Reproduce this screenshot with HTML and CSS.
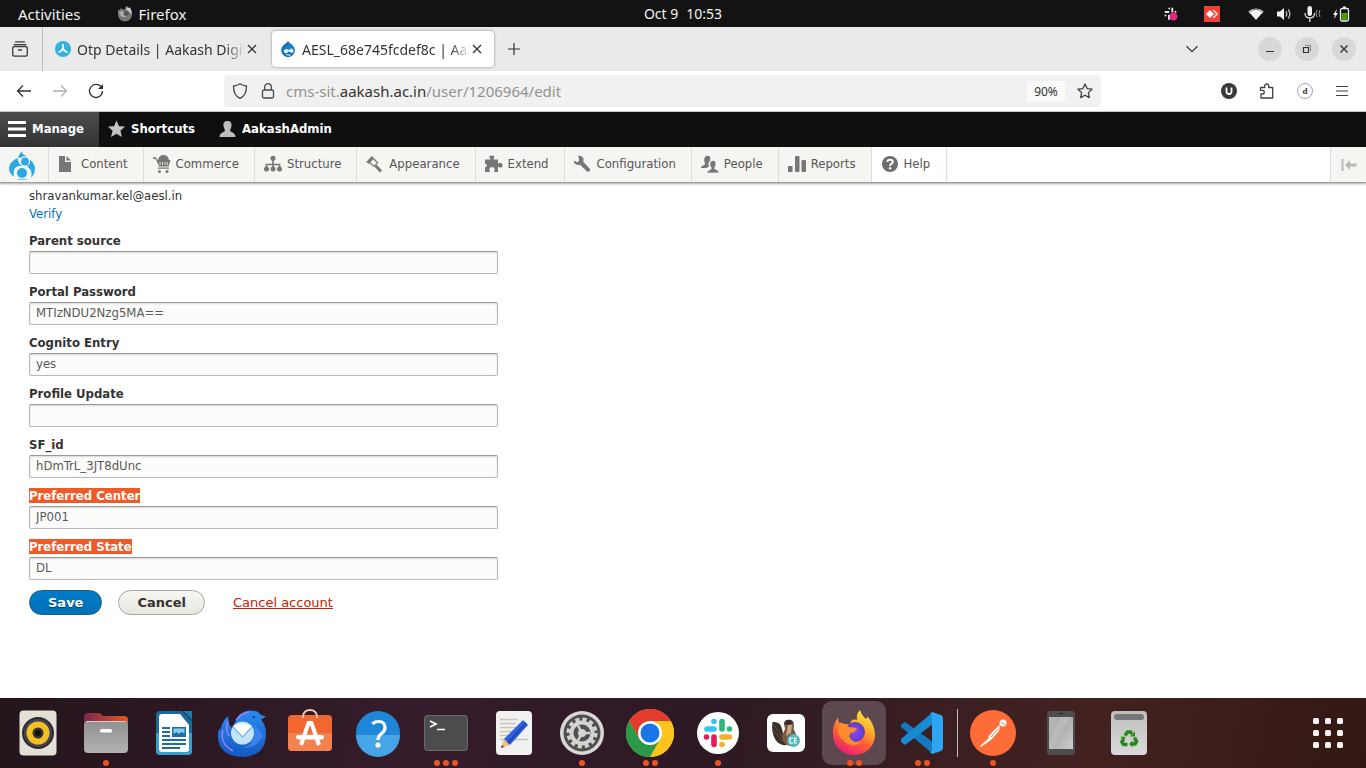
FILE: index.html
```html
<!DOCTYPE html>
<html lang="en">
<head>
<meta charset="utf-8">
<title>AESL_68e745fcdef8c | Aakash</title>
<link rel="stylesheet" href="styles.css">
</head>
<body>
<svg class="defs" width="0" height="0" aria-hidden="true">
  <defs>
    <linearGradient id="g-shell" x1="0" y1="0" x2="0" y2="1"><stop offset="0" stop-color="#919191"/><stop offset="1" stop-color="#b2b2b2"/></linearGradient>
    <linearGradient id="g-folder" x1="0" y1="0" x2="1" y2="0"><stop offset="0" stop-color="#7d2850"/><stop offset="1" stop-color="#e95420"/></linearGradient>
    <linearGradient id="g-bird" x1="0" y1="0" x2="0" y2="1"><stop offset="0" stop-color="#2a8bf2"/><stop offset="1" stop-color="#1359c2"/></linearGradient>
    <linearGradient id="g-fox" x1=".8" y1="0" x2=".3" y2="1"><stop offset="0" stop-color="#fff04a"/><stop offset=".35" stop-color="#ffae28"/><stop offset=".65" stop-color="#ff5a35"/><stop offset="1" stop-color="#ee1a78"/></linearGradient>
    <radialGradient id="g-globe"><stop offset="0" stop-color="#8b49f5"/><stop offset="1" stop-color="#5b3fc4"/></radialGradient>
    <linearGradient id="g-phone" x1="0" y1="0" x2="1" y2="1"><stop offset="0" stop-color="#b4b4b4"/><stop offset=".5" stop-color="#b0b0b0"/><stop offset="1" stop-color="#cdcdcd"/></linearGradient>
    <linearGradient id="g-bin" x1="0" y1="0" x2="0" y2="1"><stop offset="0" stop-color="#bdbdbd"/><stop offset="1" stop-color="#dadada"/></linearGradient>
  </defs>
</svg>

<header class="topbar">
  <div class="topbar-left">
    <button class="topbar-item">Activities</button>
    <button class="topbar-item app-name">
      <svg width="16" height="16" viewBox="0 0 16 16"><path d="M1 3l1.500 1.500L4 2l2 1.500h1.500L9.500 0l1.500 2 2-.5 1.500 3.500.5 3.500a7 7 0 0 1-14 0z" fill="#777"/><path d="M9.500 0l1.500 2 2-.5 1.500 3.500v4l-2-3-3-2z" fill="#c9c9c9"/><path d="M2 5.500l3-.5 3 1.500q0 1.500-2 1.500 1 2.500 4 2-4 3-7-1z" fill="#aaa"/><circle cx="9.300" cy="7.300" r="2.500" fill="#555"/></svg>
      Firefox
    </button>
  </div>
  <button class="topbar-item clock"><span>Oct 9</span><span>10:53</span></button>
  <div class="topbar-right">
    <svg class="tray-slack" width="14" height="14" viewBox="0 0 14 14"><g stroke="#e8e8e8" stroke-width="1.900" stroke-linecap="round" fill="none"><path d="M1.500 5h3M5.300 1.500h0M8.300 1.500v3M11.500 4.800h0M5 8.500v3.500M1.500 8.500h0"/></g><circle cx="9.500" cy="9.500" r="3.900" fill="#e8267e"/></svg>
    <svg class="tray-desk" width="16" height="16" viewBox="0 0 16 16"><path fill="#ef4136" d="M0 0h16v16H0z"/><path fill="#fff" d="M6 4l4 4-4 4-4-4zM8.500 4h1.500l4 4-4 4H8.500l3.500-4z"/></svg>
    <svg class="tray-wifi" width="16" height="14" viewBox="0 0 16 14"><path fill="#f2f2f2" d="M.5 4.500a11 11 0 0 1 15 0L8 13z"/><path d="M2 4.700a9 9 0 0 1 12 0" stroke="#777" fill="none"/></svg>
    <svg width="16" height="14" viewBox="0 0 16 14"><path fill="#f2f2f2" d="M1 4.500h3L8 1v12L4 9.500H1z"/><path d="M9.800 4.500q2 2.500 0 5M12.200 2.500q3.400 4.500 0 9" stroke="#bbb" stroke-width="1.300" fill="none"/></svg>
    <svg width="17" height="16" viewBox="0 0 17 16"><rect x="3.500" y="0" width="4.500" height="10" rx="2.200" fill="#f2f2f2"/><path d="M1 7q0 5 4.800 5t4.800-5M5.800 12v4" stroke="#ddd" stroke-width="1.300" fill="none"/><path d="M13 4q-2 3 0 7M16 4q-2 3 0 7" stroke="#999" fill="none"/></svg>
    <svg width="17" height="16" viewBox="0 0 17 16"><path fill="#eee" d="M4 3L0 9h2l-1 4 4-6H3z"/><path d="M10 1.500h3" stroke="#eee" stroke-width="2"/><rect x="7.500" y="2.500" width="8" height="12.500" rx="1.500" fill="none" stroke="#eee" stroke-width="1.300"/><path fill="#4e9a06" d="M8.500 7h6v7h-6z"/></svg>
  </div>
</header>

<nav class="tabstrip" aria-label="Browser tabs">
  <button class="view-btn" aria-label="Recent browsing"><svg width="18" height="18" viewBox="0 0 18 18" fill="none" stroke="#3f3f44" stroke-width="1.300" stroke-linecap="round"><path d="M4.500 1.800h9M3 4.700h12"/><rect x="1.700" y="6.500" width="14.600" height="9.700" rx="2"/><path d="M7.500 10h3"/></svg></button>
  <div class="tab">
    <svg width="16" height="16" viewBox="0 0 16 16"><circle cx="8" cy="8" r="8" fill="#35b1dd"/><path d="M8 3v4M8 7c-.5 3-3 3.500-4.500 4.500M8 7c.5 3 3 3.500 4.500 4.500" stroke="#fff" stroke-width="1.600" fill="none"/></svg>
    <span class="tab-title">Otp Details | Aakash Digital</span>
    <button class="tab-close" aria-label="Close tab"><svg width="10" height="10" viewBox="0 0 10 10"><path d="M1 1l8 8M9 1L1 9" stroke="#333" stroke-width="1.300"/></svg></button>
  </div>
  <div class="tab tab-active">
    <svg width="16" height="16" viewBox="0 0 16 16"><path d="M8 0c1 2.500 6.800 4 6.800 9.300a6.800 6.800 0 0 1-13.600 0C1.200 4 7 2.500 8 0z" fill="#0e6db7"/><path d="M9 1.500c2 2 5.500 4 5.500 8 0 2-1 3-2 2-1.500-1-3-2-5-.5-2 1-4 1-5-.500 0-5 5-5 6.500-9z" fill="#1682cc"/><path d="M5 12q-2-3 1-3.500 1.500 0 2.500 1 4-3 4.500 0 0 3-2.500 1.500L8.500 10Q7 12.500 5 12zM6 13.500q2 1.500 5 .3" fill="#fff" stroke="#fff" stroke-width=".6"/></svg>
    <span class="tab-title">AESL_68e745fcdef8c | Aakash</span>
    <button class="tab-close" aria-label="Close tab"><svg width="10" height="10" viewBox="0 0 10 10"><path d="M1 1l8 8M9 1L1 9" stroke="#333" stroke-width="1.300"/></svg></button>
  </div>
  <button class="new-tab" aria-label="New tab"><svg width="12" height="12" viewBox="0 0 12 12"><path d="M6 0v12M0 6h12" stroke="#333" stroke-width="1.200"/></svg></button>
  <div class="window-tools">
    <button class="list-tabs" aria-label="List all tabs"><svg width="14" height="8" viewBox="0 0 14 8"><path d="M1.500 1.200L7 6.700l5.500-5.500" fill="none" stroke="#3a3a3a" stroke-width="1.300"/></svg></button>
    <button class="win-btn" aria-label="Minimize"><svg width="10" height="10" viewBox="0 0 10 10"><path d="M1 7.500h8" stroke="#333"/></svg></button>
    <button class="win-btn" aria-label="Restore"><svg width="10" height="10" viewBox="0 0 10 10" fill="none"><path d="M3 1.500h5.500V7" stroke="#888"/><path d="M1.500 3.500h5v5h-5z" stroke="#333" stroke-width="1.200"/></svg></button>
    <button class="win-btn" aria-label="Close"><svg width="10" height="10" viewBox="0 0 10 10"><path d="M1.500 1.500l7 7M8.500 1.500l-7 7" stroke="#333" stroke-width="1.400"/></svg></button>
  </div>
</nav>

<div class="navbar">
  <button class="nav-btn" aria-label="Back"><svg width="16" height="14" viewBox="0 0 16 14"><path d="M7 1.500L1.500 7 7 12.500M1.500 7H15" fill="none" stroke="#303036" stroke-width="1.300"/></svg></button>
  <button class="nav-btn" aria-label="Forward"><svg width="16" height="14" viewBox="0 0 16 14"><path d="M9 1.500L14.500 7 9 12.500M14.500 7H1" fill="none" stroke="#b0b0b2" stroke-width="1.300"/></svg></button>
  <button class="nav-btn" aria-label="Reload"><svg width="16" height="16" viewBox="0 0 16 16"><path d="M13.500 4.500A6.500 6.500 0 1 0 14.500 8" fill="none" stroke="#303036" stroke-width="1.300"/><path d="M15 1v5h-5z" fill="#303036"/></svg></button>
  <div class="urlbar">
    <svg width="16" height="16" viewBox="0 0 16 16"><path d="M8 .8c2 1.400 4 2 6.500 2.200C14.600 9 13 13 8 15.300 3 13 1.400 9 1.500 3 4 2.800 6 2.200 8 .8z" fill="none" stroke="#47474c" stroke-width="1.300"/></svg>
    <svg class="lock" width="14" height="16" viewBox="0 0 14 16"><rect x="1.500" y="7" width="11" height="8" rx="1.500" fill="none" stroke="#47474c" stroke-width="1.300"/><path d="M3.700 7V4a3.300 3.300 0 0 1 6.600 0v3" fill="none" stroke="#47474c" stroke-width="1.300"/></svg>
    <a class="address" href="#">cms-sit.<span class="host">aakash.ac.in</span>/user/1206964/edit</a>
    <button class="zoom-badge">90%</button>
    <button class="star" aria-label="Bookmark"><svg width="16" height="16" viewBox="0 0 16 16"><path d="M8 1l2.100 4.600 4.900.6-3.600 3.400.9 5L8 12.200l-4.300 2.400.9-5L1 6.200l4.900-.6z" fill="none" stroke="#3f3f44" stroke-width="1.300" stroke-linejoin="round"/></svg></button>
  </div>
  <div class="nav-tools">
    <button aria-label="uBlock"><svg width="16" height="16" viewBox="0 0 16 16"><circle cx="8" cy="8" r="8" fill="#38383d"/><path d="M5.500 4.500v4q0 2.500 2.500 2.500t2.500-2.500v-4" fill="none" stroke="#fff" stroke-width="1.800"/></svg></button>
    <button aria-label="Extensions"><svg width="16" height="16" viewBox="0 0 16 16"><path d="M1.500 6V4.500h4.200V3a2 2 0 0 1 4 0v1.500h4v10.500H2v-4h1.500a1.800 1.800 0 0 0 0-3.600H1.500z" fill="none" stroke="#3f3f44" stroke-width="1.300" stroke-linejoin="round"/></svg></button>
    <button class="ext-d">d</button>
    <button aria-label="Menu"><svg width="14" height="12" viewBox="0 0 14 12"><path d="M1 1.500h12M1 6h12M1 10.500h12" stroke="#3f3f44" stroke-width="1.200"/></svg></button>
  </div>
</div>

<div class="admin-bar">
  <a class="admin-tab is-open" href="#"><svg width="18" height="18" viewBox="0 0 18 18"><path d="M0 2.500h18M0 9h18M0 15.500h18" stroke="#fff" stroke-width="3"/></svg>Manage</a>
  <a class="admin-tab" href="#"><svg width="18" height="18" viewBox="0 0 18 18"><path d="M8.500.5l2.500 5.700 6 .4-4.600 4.100L14 17l-5.500-3.300L3 17l1.600-6.300L0 6.600l6-.4z" fill="#c4c4c4"/></svg>Shortcuts</a>
  <a class="admin-tab" href="#"><svg width="18" height="18" viewBox="0 0 18 18"><path d="M8.500 1c3 0 4.500 2 4 5-.3 2-1.200 3-1.500 4.500.5 2.500 5.500 1.500 5.500 6.500H.5c0-5 5-4 5.500-6.500C5.700 9 4.800 8 4.500 6c-.5-3 1-5 4-5z" fill="#bdbdbd"/></svg>AakashAdmin</a>
</div>

<nav class="tray" aria-label="Administration menu">
  <a class="tray-home" href="#" aria-label="Home"><svg width="28" height="30" viewBox="0 0 28 30" fill="#2ba9e0"><path d="M13.500 1q.5 3.500 6 5.500-4-1-8.500 2-1-1.500 0-3.500 2-2 2.500-4z"/><path d="M9.500 8q.5 6 5 8-6-1-8.500 4-1 3.500.5 7Q1 24 1 18q.5-6 8.500-10z"/><path d="M22 9.500q5 4.500 5 9.500 0 5-4 8.500 1.500-5-1-8.500l-3-3q4-2 3-6.500z"/><circle cx="17" cy="11.500" r="3.900"/><circle cx="14" cy="23" r="5"/><path d="M9 28.500q5 2 10 0l-1 1q-4 1-8 0z"/></svg></a>
  <a class="tray-link" href="#"><svg width="18" height="18" viewBox="0 0 18 18" fill="#777"><path d="M1 1h6v6h6v10H1z"/><path d="M8.500 1v4.500H13z"/></svg>Content</a>
  <a class="tray-link" href="#"><svg width="18" height="18" viewBox="0 0 18 18" fill="#777"><path d="M0 2l3 .5L4.500 5h.5q1-5 5.500-5 4.500 0 5.500 5h1.500l-2 6.500H6L3 4.500 0 3.500zM5 12.500h11v1.300H4.500z"/><circle cx="6.500" cy="16.500" r="1.500"/><circle cx="14" cy="16.500" r="1.500"/><path d="M7 7v3M9.500 7v3M12 7v3M14.300 7v3" stroke="#f5f5f2" stroke-width=".8"/></svg>Commerce</a>
  <a class="tray-link" href="#"><svg width="18" height="18" viewBox="0 0 18 18"><g fill="#777"><circle cx="9" cy="3.300" r="2.500"/><circle cx="2.500" cy="14" r="2.500"/><circle cx="9" cy="14" r="2.500"/><circle cx="15.500" cy="14" r="2.500"/></g><path d="M9 4v9M2.500 13V9.500h13V13" fill="none" stroke="#777" stroke-width="1.700"/></svg>Structure</a>
  <a class="tray-link" href="#"><svg width="18" height="18" viewBox="0 0 18 18"><path d="M.2 7L6 1l2 2.200L3 9z" fill="#777"/><path d="M7.500 3.500l4 4.300-3.500 3.500L4 8" fill="none" stroke="#777" stroke-width="1.200"/><path d="M9.500 10.500l5.500 6" stroke="#777" stroke-width="3"/></svg>Appearance</a>
  <a class="tray-link" href="#"><svg width="18" height="18" viewBox="0 0 18 18"><path d="M0 4.500h5.500Q3.500 1 5 .7h4Q9.500 1.500 8.500 4.500H13v4.300q2-2 4 0 1.500 2-.5 3.500-1.500 1-3.500-.7V17H9q1.500-4.500-1-4.700h-2Q3.500 12.500 5 17H0v-4.500q2-1 2-2T0 8.500z" fill="#777"/></svg>Extend</a>
  <a class="tray-link" href="#"><svg width="18" height="18" viewBox="0 0 18 18"><path d="M4 .8q4-.5 5.500 3 .3 1.700-.3 3L16 14q.7 1-.5 2t-2.500.5L6 9.700q-3.500 1-6-2V5.500l3 1.700L5 6V3.500z" fill="#777"/></svg>Configuration</a>
  <a class="tray-link" href="#"><svg width="18" height="18" viewBox="0 0 18 18" fill="#777"><path d="M6.500.7c3 0 3.200 2.500 2.500 5L8 7q-1.500 3 .5 4.500L5 13H0q0-2.500 3.500-3L4 8C2.500 5.500 3 .7 6.500.7z"/><path d="M12 5.500c3 0 3.500 3 2.500 5.500l-1 2q0 1 1.500 1.500 3 .5 3 3.500H6q0-3 3.500-3.500.8-.5.8-1.500C8 10 8.500 5.500 12 5.500z" stroke="#f5f5f2" stroke-width=".7"/></svg>People</a>
  <a class="tray-link" href="#"><svg width="18" height="18" viewBox="0 0 18 18" fill="#777"><rect y="11" width="4.500" height="6"/><rect x="7" y="1" width="4.500" height="16" rx="1"/><rect x="13.500" y="5" width="4.500" height="12" rx="1"/></svg>Reports</a>
  <a class="tray-link is-current" href="#"><svg width="18" height="18" viewBox="0 0 18 18"><circle cx="9" cy="9" r="8" fill="#6e6e6e"/><path d="M6.300 7q.2-2.300 2.800-2.300 2.700 0 2.700 2 0 1.300-1.300 2T9.200 11" fill="none" stroke="#fff" stroke-width="2"/><circle cx="9.100" cy="13.300" r="1.200" fill="#fff"/></svg>Help</a>
  <button class="tray-toggle" aria-label="Vertical orientation"><svg width="16" height="14" viewBox="0 0 16 14"><path d="M.5 1h2v12h-2zM4 7l5-5v3.500h6.500v3H9V12z" fill="#b9b9b9"/></svg></button>
</nav>

<main class="page">
  <form class="account-form">
    <div class="mail">shravankumar.kel@aesl.in</div>
    <div class="verify"><a href="#">Verify</a></div>
    <div class="field"><label for="f1">Parent source</label><input id="f1" type="text"></div>
    <div class="field"><label for="f2">Portal Password</label><input id="f2" type="text" value="MTIzNDU2Nzg5MA=="></div>
    <div class="field"><label for="f3">Cognito Entry</label><input id="f3" type="text" value="yes"></div>
    <div class="field"><label for="f4">Profile Update</label><input id="f4" type="text"></div>
    <div class="field"><label for="f5">SF_id</label><input id="f5" type="text" value="hDmTrL_3JT8dUnc"></div>
    <div class="field"><label for="f6"><mark>Preferred Center</mark></label><input id="f6" type="text" value="JP001"></div>
    <div class="field"><label for="f7"><mark>Preferred State</mark></label><input id="f7" type="text" value="DL"></div>
    <div class="actions">
      <button type="button" class="btn btn-primary">Save</button>
      <button type="button" class="btn">Cancel</button>
      <a class="danger" href="#">Cancel account</a>
    </div>
  </form>
</main>

<footer class="dock">
  <button class="dock-item" aria-label="Rhythmbox"><svg width="48" height="48" viewBox="0 0 48 48"><rect x="5.500" y="1.500" width="37" height="45" rx="4" fill="#e4e0d6"/><circle cx="24" cy="24" r="16" fill="#2b2a33"/><circle cx="24" cy="24" r="14" fill="#45434b"/><circle cx="24" cy="24" r="11.500" fill="#f2c021"/><circle cx="24" cy="24" r="5.500" fill="#33332f"/><circle cx="24" cy="24" r="3" fill="#111"/></svg></button>
  <button class="dock-item" aria-label="Files"><svg width="48" height="48" viewBox="0 0 48 48"><path d="M2 8q0-4 4-4h11q2 0 4 3h21q4 0 4 4v14H2z" fill="url(#g-folder)"/><rect x="2" y="12" width="44" height="32" rx="4" fill="url(#g-shell)"/><path d="M4 12.500h40" stroke="#d0d0d0"/><rect x="18" y="20" width="12" height="3.500" rx="1.500" fill="#fff"/></svg><span class="dots"><i></i></span></button>
  <button class="dock-item" aria-label="Writer"><svg width="48" height="48" viewBox="0 0 48 48"><path d="M10 2h22l10 10v30q0 4-4 4H10q-4 0-4-4V6q0-4 4-4z" fill="#176b9b"/><path d="M6 24h36v18q0 4-4 4H10q-4 0-4-4z" fill="#3a9fce"/><path d="M33 2h9v9z" fill="#1b7cb0"/><path d="M12 5h18l9 11v24q0 3-3 3H12q-3 0-3-3V8q0-3 3-3z" fill="#fff"/><path d="M12 19h8M12 23h8M12 27h8M12 31h24M12 35h24M12 39h18" stroke="#1b6fa3" stroke-width="2"/><path d="M22 18h14v10H22z" fill="#1b6fa3"/><path d="M23.500 19.500h11v5l-3-1.500-3 2-2-2-3 2z" fill="#8ccbef"/></svg></button>
  <button class="dock-item" aria-label="Thunderbird"><svg width="48" height="48" viewBox="0 0 48 48"><path d="M17 13Q21 2 32 1.500q9 0 10 4l6 2-5 3q5 6 5 14 0 22-22 23.500Q4 48 .5 32q-2-10 2-13v3q1-10 8-15-1 8 3.500 12z" fill="url(#g-bird)"/><path d="M5 21q-4 13 10 21M10 12q-3 8 1 15M18 11q6-7 13-8" fill="none" stroke="#9c7df4" stroke-width="1.500"/><path d="M35 15q3 7 0 15-3 8-11 9 16 0 21-13" fill="#3c82ee"/><circle cx="24.500" cy="24" r="11.500" fill="#c3e4fa"/><path d="M15 17q9-5 19 0l-9.500 11z" fill="#fff"/><path d="M15 18l9.500 10L34 18" fill="none" stroke="#78b7ea" stroke-width="1.300"/><circle cx="36" cy="8" r="1" fill="#10316f"/></svg></button>
  <button class="dock-item" aria-label="Software"><svg width="48" height="48" viewBox="0 0 48 48"><rect x="2" y="6" width="44" height="36" rx="4" fill="#f26630"/><path d="M2 24h44v14q0 4-4 4H6q-4 0-4-4z" fill="#f3824f"/><path d="M17 9V7q1-6 7-6t7 6v2" fill="none" stroke="#f3cda4" stroke-width="1.800"/><path d="M15 36L22.500 14h3L33 36" fill="none" stroke="#fff" stroke-width="4"/><rect x="10" y="26" width="28" height="4.500" rx="2.200" fill="#fff"/></svg></button>
  <button class="dock-item" aria-label="Help"><svg width="48" height="48" viewBox="0 0 48 48"><circle cx="24" cy="24" r="22" fill="#1f86d8"/><path d="M2 26a22 22 0 0 0 44 0z" fill="#45a5e6"/><path d="M18.500 15q2-2.500 6-2.500 6.500 0 6.500 6 0 3.500-3.500 6T24 31" fill="none" stroke="#fff" stroke-width="3.200"/><circle cx="24" cy="36" r="2.600" fill="#fff"/></svg></button>
  <button class="dock-item" aria-label="Terminal"><svg width="48" height="48" viewBox="0 0 48 48"><rect x="2" y="6" width="44" height="36" rx="4" fill="#6b6b6b"/><rect x="3" y="7" width="42" height="34" rx="3" fill="#4c4c4c"/><path d="M8 12l6 3-6 3M15 20.500h8" fill="none" stroke="#fff" stroke-width="1.700"/></svg><span class="dots"><i></i><i></i><i></i></span></button>
  <button class="dock-item" aria-label="Text editor"><svg width="48" height="48" viewBox="0 0 48 48"><rect x="6" y="2" width="36" height="44" rx="4" fill="#f1f1f0"/><path d="M10 10.500h18M10 14.500h16M10 18.500h16M10 22.500h12M10 26.500h10M10 30.500h28" stroke="#c7c6b8" stroke-width="1.600"/><path d="M11 39l3-9 6 6z" fill="#f5bd7d"/><path d="M11 39l1-3 2 2z" fill="#333"/><path d="M14 30L33 11l5 5-18 20z" fill="#2f62dd"/><path d="M18 34l18-20" stroke="#1c47ae" stroke-width="2"/></svg></button>
  <button class="dock-item" aria-label="Settings"><svg width="48" height="48" viewBox="0 0 48 48"><circle cx="24" cy="24" r="22" fill="#d8d8d7"/><circle cx="24" cy="24" r="18.500" fill="#505050"/><circle cx="24" cy="24" r="13.800" fill="none" stroke="#d3d3d1" stroke-width="3.500" stroke-dasharray="4.200 3.026"/><circle cx="24" cy="24" r="10.500" fill="none" stroke="#d3d3d1" stroke-width="4"/><circle cx="24" cy="24" r="4" fill="#d3d3d1"/><path d="M24 24h8M24 24l-4-7.500M24 24l-4 7.500" stroke="#d3d3d1" stroke-width="2.500"/></svg><span class="dots"><i></i></span></button>
  <button class="dock-item" aria-label="Chrome"><svg width="48" height="48" viewBox="0 0 48 48"><circle cx="24" cy="24" r="24" fill="#fcc31e"/><path d="M3.200 12A24 24 0 0 1 44.800 12H24L13.600 30z" fill="#e33b2e"/><path d="M3.200 12A24 24 0 0 0 24 48l10.400-18H13.600z" fill="#2b9a48"/><path d="M24 12h20.800A24 24 0 0 1 24 48l10.400-18z" fill="#fcc31e"/><circle cx="24" cy="24" r="12" fill="#fff"/><circle cx="24" cy="24" r="9.500" fill="#1a73e8"/></svg><span class="dots"><i></i><i></i></span></button>
  <button class="dock-item" aria-label="Slack"><svg width="48" height="48" viewBox="0 0 48 48"><circle cx="24" cy="24" r="21" fill="#fff"/><g stroke-width="5.600" stroke-linecap="round"><path d="M13 20h7M20 12.500h0" stroke="#36c5f0"/><path d="M28 12.500V20M35.500 20h0" stroke="#2eb67d"/><path d="M28 28h7.500M28 35.500h0" stroke="#ecb22e"/><path d="M20 28v7.500M12.500 28h0" stroke="#e01e5a"/></g></svg><span class="dots"><i></i></span></button>
  <button class="dock-item" aria-label="DBeaver"><svg width="48" height="48" viewBox="0 0 48 48"><rect x="5" y="5" width="38" height="38" rx="6" fill="#fff"/><path d="M10.500 13q8-1 9.500 7l1 4q-1 5 4 12-8 1-12-6t-2.500-17z" fill="#3a302b"/><path d="M12 16l8 12M11 21l9 11" stroke="#6d5a4d" stroke-width=".7"/><path d="M22 15q1-5 6-4 4 0 4 5-1 4 1 7t1 10l-6 4q-8-2-8-10l3-7z" fill="#7b5a45"/><path d="M22 15q1-5 7-4l2 3-5 2z" fill="#352a26"/><path d="M26 16h4l-1 8-5 3z" fill="#c6aa8c"/><circle cx="31.500" cy="31.500" r="6.500" fill="#54b7bd"/><path d="M31 29h-3v5h3M35 29h-2.500v5H35M32.500 31.500H35" fill="none" stroke="#fff" stroke-width="1.200"/></svg></button>
  <button class="dock-item is-focused" aria-label="Firefox"><svg width="48" height="48" viewBox="0 0 48 48"><path d="M30 1q2 6 6 9 2-1 1-3 8 9 8 19a21 20 0 0 1-42 0Q2 15 8 9l1 5q3-1 5 1h6Q21 9 27 11 26 5 30 1z" fill="url(#g-fox)"/><circle cx="25" cy="23" r="10" fill="url(#g-globe)"/><path d="M7 18q7-4 12 0l8 1q-1 4-6 5-3 2-1 5 4 6 11 3-4 7-13 3Q8 30 7 18z" fill="#ff8b2c"/></svg><span class="dots"><i></i><i></i></span></button>
  <button class="dock-item" aria-label="Visual Studio Code"><svg width="48" height="48" viewBox="0 0 48 48"><path d="M3 16l4-3 28 20v12L3 18z" fill="#1479be"/><path d="M35 3v12L7 36l-4-3v-3z" fill="#1a8ad2"/><path d="M34 3l9 3q2 1 2 3v30q0 2-2 3l-9 3-2-2q2 0 2-3V8q0-3-2-3z" fill="#2ea5f2"/></svg><span class="dots"><i></i><i></i></span></button>
  <span class="dock-rule"></span>
  <button class="dock-item" aria-label="Postman"><svg width="48" height="48" viewBox="0 0 48 48"><circle cx="24" cy="24" r="23" fill="#ff6c37"/><circle cx="34" cy="14" r="3.500" fill="#fff"/><path d="M31 16q-8 4-12 13l3 2 8-9zM20 29l-9 8 1 1 10-7z" fill="#fff"/><path d="M20 26l8-8M22 28l7-8M32 13l4 3" stroke="#ff6c37" stroke-width=".9"/></svg><span class="dots"><i></i></span></button>
  <button class="dock-item" aria-label="Phone"><svg width="48" height="48" viewBox="0 0 48 48"><rect x="10" y="2" width="28" height="44" rx="3" fill="#4d4d4d"/><path d="M12 8h24v32H12z" fill="url(#g-phone)"/><path d="M24 8h9L16 40h-4v-7z" fill="#fff" opacity=".12"/><path d="M22 4.500h4" stroke="#222"/></svg></button>
  <button class="dock-item" aria-label="Trash"><svg width="48" height="48" viewBox="0 0 48 48"><rect x="6" y="2" width="36" height="44" rx="4" fill="url(#g-bin)"/><rect x="9" y="5" width="30" height="6" rx="3" fill="#777"/><g fill="none" stroke="#278a1d" stroke-width="3.600"><path d="M20 26.500l2.500-3.500h3l1.500 2"/><path d="M29.500 28.500l2 4-1.500 2.500h-3.500"/><path d="M22.500 35.500h-4l-1.500-2.500 1.500-3"/></g><path d="M30 22.500v5h-5zM27.500 31.500v7l-3.500-3.500zM15.500 27.500l5 .5-2 4z" fill="#278a1d"/></svg></button>
  <button class="app-grid" aria-label="Show applications"><svg width="30" height="30" viewBox="0 0 30 30" fill="#f5f3f1"><rect width="6" height="6" rx="1.500"/><rect x="12" width="6" height="6" rx="1.500"/><rect x="24" width="6" height="6" rx="1.500"/><rect y="12" width="6" height="6" rx="1.500"/><rect x="12" y="12" width="6" height="6" rx="1.500"/><rect x="24" y="12" width="6" height="6" rx="1.500"/><rect y="24" width="6" height="6" rx="1.500"/><rect x="12" y="24" width="6" height="6" rx="1.500"/><rect x="24" y="24" width="6" height="6" rx="1.500"/></svg></button>
</footer>
</body>
</html>
```
FILE: styles.css
```css
* { box-sizing: border-box; }
html, body { height: 100%; }
body {
  margin: 0;
  display: flex;
  flex-direction: column;
  overflow: hidden;
  background: #fff;
  font-family: "Noto Sans", "Open Sans", sans-serif;
  font-size: 14px;
  color: #333;
}
button {
  margin: 0;
  padding: 0;
  border: 0;
  background: none;
  font: inherit;
  color: inherit;
}
a { text-decoration: none; color: inherit; }
svg { display: block; flex: none; }
.defs { position: absolute; }

/* Desktop top bar */
.topbar {
  display: grid;
  grid-template-columns: 1fr auto 1fr;
  align-items: center;
  height: 27px;
  background: #131313;
  color: #f2f2f2;
}
.topbar-left {
  display: flex;
  gap: 36px;
  padding-left: 18px;
  font-size: 15px;
}
.topbar-item { display: flex; align-items: center; gap: 6px; }
.clock { gap: 8px; }
.topbar-right {
  display: flex;
  align-items: center;
  justify-content: flex-end;
  gap: 12px;
  padding-right: 16px;
}
.tray-slack { margin-right: 14px; }
.tray-desk { margin-right: 16px; }

/* Browser tabs */
.tabstrip {
  display: flex;
  align-items: center;
  height: 44px;
  background: #eaeaea;
}
.view-btn {
  display: grid;
  place-items: center;
  width: 43px;
  height: 44px;
  padding-right: 2px;
  border-right: 1px solid #bdbdbd;
}
.tab {
  display: flex;
  align-items: center;
  gap: 6px;
  width: 222px;
  height: 36px;
  margin-left: 4px;
  padding: 0 12px 0 8px;
  border-radius: 4px;
}
.tab-active {
  margin-left: 3px;
  background: #fff;
  box-shadow: 0 0 3px rgba(0, 0, 0, .4);
}
.tab-title {
  flex: 1;
  overflow: hidden;
  white-space: nowrap;
  mask-image: linear-gradient(to left, transparent, #000 20px);
}
.tab-close { margin-left: -4px; }
.new-tab { margin-left: 14px; }
.window-tools {
  display: flex;
  align-items: center;
  gap: 13px;
  margin-left: auto;
  padding-right: 10px;
}
.list-tabs { margin-right: 46px; }
.win-btn {
  display: grid;
  place-items: center;
  width: 24px;
  height: 24px;
  border-radius: 50%;
  background: #d8d8d8;
}

/* Address row */
.navbar {
  display: flex;
  align-items: center;
  height: 41px;
  padding-left: 16px;
  border-bottom: 1px solid #c8c8c8;
}
.nav-btn { width: 16px; margin-right: 20px; }
.urlbar {
  display: flex;
  flex: 1;
  align-items: center;
  height: 32px;
  margin-left: 100px;
  padding: 0 8px;
  border-radius: 4px;
  background: #f1f1f1;
}
.lock { margin-left: 13px; }
.address { flex: 1; margin-left: 11px; font-size: 15px; color: #919191; }
.host { color: #333; }
.zoom-badge {
  width: 38px;
  height: 21px;
  border-radius: 3px;
  background: #fafafa;
  font-size: 12px;
}
.star { margin-left: 12px; }
.nav-tools {
  display: flex;
  align-items: center;
  gap: 22px;
  margin-left: 120px;
  padding-right: 17px;
}
.ext-d {
  width: 16px;
  height: 16px;
  border: 1px solid #a99ad0;
  border-radius: 50%;
  font: bold 9px/12px "Liberation Serif", serif;
}

/* Site administration */
.admin-bar, .tray, .page {
  font-family: "DejaVu Sans Condensed", "DejaVu Sans", sans-serif;
  font-size: 13px;
}
.admin-bar {
  display: flex;
  height: 35px;
  background: #0f0f0f;
  color: #fff;
  font-weight: bold;
}
.admin-tab, .tray-link {
  display: flex;
  align-items: center;
  gap: 5px;
  padding: 0 15px 2px 9px;
}
.admin-tab.is-open {
  padding-left: 8px;
  gap: 6px;
  background: linear-gradient(#4c4c4c, #333);
}
.tray {
  display: flex;
  position: relative;
  height: 36px;
  border-bottom: 1px solid #a0a0a0;
  box-shadow: 0 1px 2px rgba(0, 0, 0, .35);
  color: #565656;
}
.tray-home {
  display: grid;
  place-items: center;
  width: 49px;
  padding-right: 4px;
  border-right: 1px solid #ddd;
  background: #f5f5f2;
}
.tray-link { border-right: 1px solid #ddd; background: #f5f5f2; }
.tray-link.is-current { padding-right: 16px; background: #fff; }
.tray-toggle {
  display: grid;
  place-items: center;
  width: 36px;
  margin-left: auto;
  border-left: 1px solid #ddd;
  background: #f5f5f2;
}

.page { flex: 1; min-height: 0; overflow: hidden; padding: 4px 29px 0; }
.mail, .verify { line-height: 18px; }
.verify { margin-bottom: 9px; }
.verify a { color: #0074bd; }
.field { max-width: 469px; margin-bottom: 9px; }
.field label {
  display: block;
  margin-bottom: 1px;
  line-height: 18px;
  font-weight: bold;
}
.field mark { background: #ef5a28; color: #fff; }
.field input {
  display: block;
  width: 100%;
  height: 23px;
  padding: 0 6px 2px;
  border: 1px solid #b8b8b8;
  border-top-color: #999;
  border-radius: 2px;
  background: #fcfcfa;
  box-shadow: inset 0 1px 2px rgba(0, 0, 0, .15);
  font: inherit;
  color: #595959;
}
.actions {
  display: flex;
  align-items: center;
  padding-top: 1px;
  font-family: "DejaVu Sans", sans-serif;
}
.btn {
  height: 25px;
  margin-right: 16px;
  padding: 0 18px;
  border: 1px solid #a6a6a6;
  border-radius: 13px;
  background: linear-gradient(#f6f6f3, #e7e7df);
  font-weight: bold;
}
.btn-primary {
  border-color: #1e5c90;
  background: linear-gradient(#007bc6, #0071b8);
  color: #fff;
  text-shadow: 0 1px 1px rgba(0, 0, 0, .5);
}
.danger { margin-left: 12px; color: #c72100; text-decoration: underline; }

/* Launcher */
.dock {
  display: flex;
  align-items: center;
  height: 70px;
  padding: 0 19px 0 4px;
  background: linear-gradient(100deg, #24151c, #351c2b 30%, #2d1924 52%, #432220 80%, #321713);
}
.dock-item {
  display: flex;
  position: relative;
  align-items: center;
  justify-content: center;
  width: 64px;
  height: 64px;
  margin: 0 2px;
  border-radius: 10px;
}
.is-focused { background: #5d4850; }
.dots {
  display: flex;
  position: absolute;
  left: 0;
  right: 0;
  bottom: -1px;
  justify-content: center;
  gap: 3px;
}
.dots i { width: 6px; height: 6px; border-radius: 50%; background: #ec5424; }
.dock-rule { width: 1px; height: 48px; margin: 0 1px; background: #c8bfc0; }
.app-grid { margin-left: auto; padding-right: 4px; }
```
